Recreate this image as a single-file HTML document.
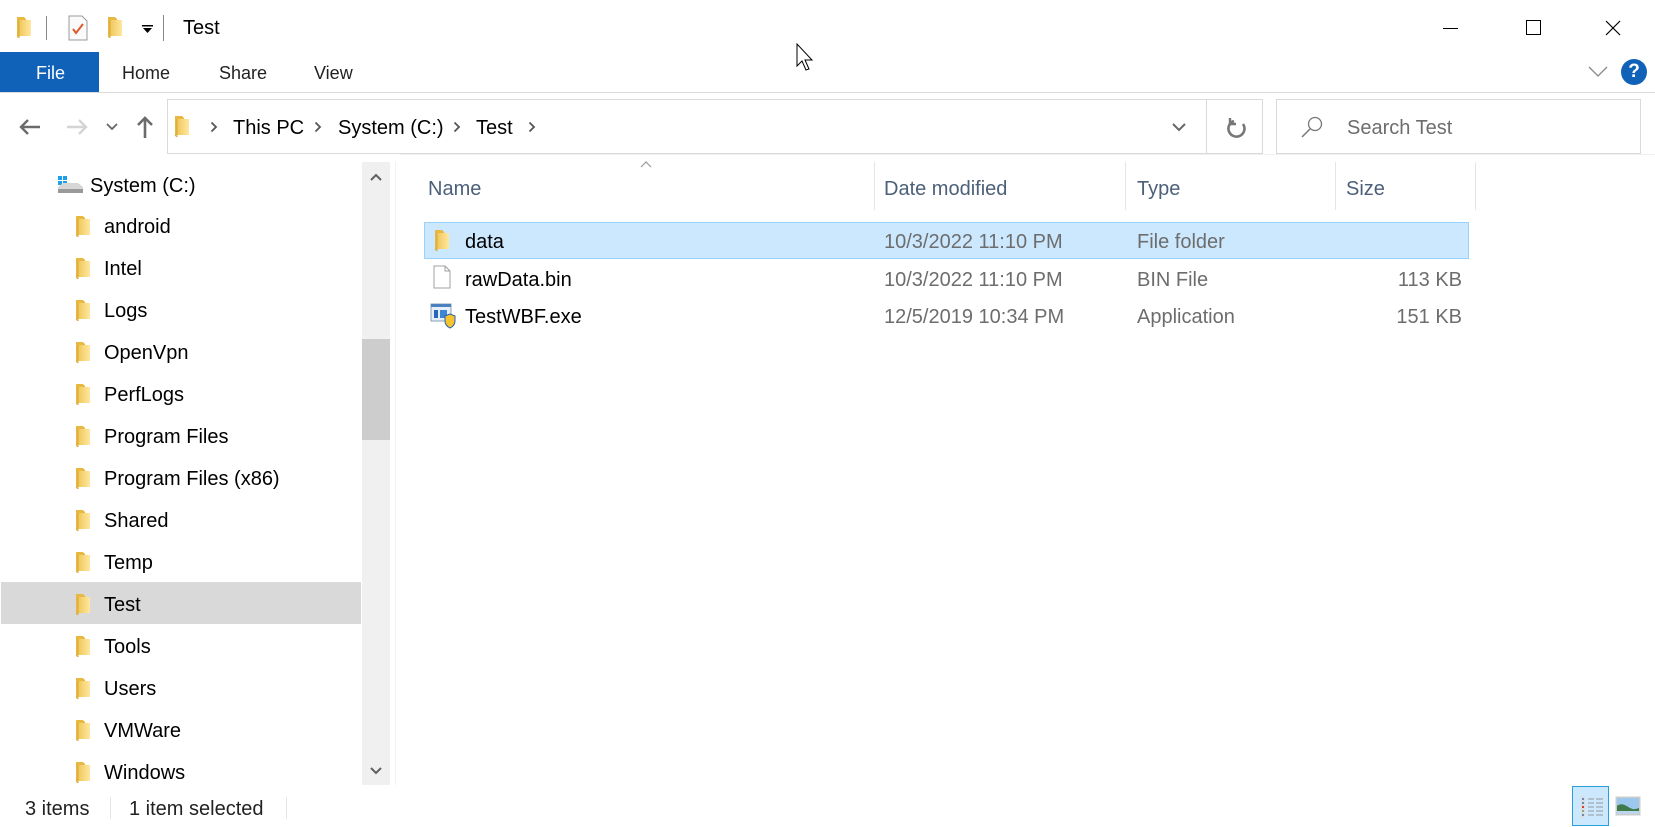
<!DOCTYPE html>
<html><head><meta charset="utf-8"><style>
*{margin:0;padding:0;box-sizing:border-box}
body{width:1655px;height:827px;background:#fff;position:relative;overflow:hidden;font-family:"Liberation Sans",sans-serif;font-size:20px;color:#000}
.a{position:absolute;white-space:nowrap;line-height:22px}
.g{color:#6d6d6d}
.h{color:#4c607a}
.fd{position:absolute;width:16px;height:22px}
.cv{position:absolute}
</style></head><body>
<svg width="0" height="0" style="position:absolute"><defs>
<linearGradient id="fg" x1="0" y1="0" x2="1" y2="0"><stop offset="0" stop-color="#f0c75a"/><stop offset="1" stop-color="#ffe7a0"/></linearGradient>
<symbol id="fold" viewBox="0 0 16 22"><path d="M1 1h7l2 2v17H1z" fill="#e8b840"/><path d="M3 4h12v16H3z" fill="url(#fg)"/><path d="M1 20l2 2V4" fill="none" stroke="#d9a93a"/></symbol>
<symbol id="chev" viewBox="0 0 8 12"><path d="M1.5 1.5l4.5 4.5-4.5 4.5" fill="none" stroke="#555" stroke-width="1.8"/></symbol>
</defs></svg>

<!-- title bar -->
<svg class="fd" style="left:16px;top:16px"><use href="#fold"/></svg>
<div style="position:absolute;left:46px;top:16px;width:1px;height:24px;background:#888"></div>
<svg style="position:absolute;left:68px;top:15px" width="20" height="26"><path d="M1 1h13l5 5v19H1z" fill="#fafafa" stroke="#999"/><path d="M5 14l3 4 7-9" fill="none" stroke="#e0592a" stroke-width="2"/></svg>
<svg class="fd" style="left:107px;top:16px"><use href="#fold"/></svg>
<svg style="position:absolute;left:142px;top:25px" width="12" height="9"><rect x="0" y="0" width="11" height="1.5" fill="#000"/><path d="M1 3h9l-4.5 5z" fill="#000"/></svg>
<div style="position:absolute;left:163px;top:15px;width:1px;height:26px;background:#888"></div>
<div class="a" style="left:183px;top:17px;font-size:20px">Test</div>
<div style="position:absolute;left:1443px;top:28px;width:15px;height:1px;background:#000"></div>
<div style="position:absolute;left:1526px;top:20px;width:15px;height:15px;border:1px solid #000"></div>
<svg style="position:absolute;left:1605px;top:20px" width="16" height="16"><path d="M1 1L15 15M15 1L1 15" stroke="#000" stroke-width="1.2"/></svg>

<!-- ribbon -->
<div style="position:absolute;left:0;top:52px;width:99px;height:40px;background:#0f62b8"></div>
<div class="a" style="left:36px;top:62px;color:#fff;font-size:18px">File</div>
<div class="a" style="left:122px;top:62px;font-size:18px;color:#222">Home</div>
<div class="a" style="left:219px;top:62px;font-size:18px;color:#222">Share</div>
<div class="a" style="left:314px;top:62px;font-size:18px;color:#222">View</div>
<div style="position:absolute;left:0;top:92px;width:1655px;height:1px;background:#dadada"></div>
<svg style="position:absolute;left:1588px;top:66px" width="20" height="12"><path d="M1 1l9 9 9-9" fill="none" stroke="#888" stroke-width="1.3"/></svg>
<div style="position:absolute;left:1621px;top:59px;width:26px;height:26px;border-radius:50%;background:#0f62b8;color:#fff;font-weight:bold;font-size:19px;text-align:center;line-height:26px">?</div>

<!-- nav buttons -->
<svg style="position:absolute;left:18px;top:118px" width="24" height="18"><path d="M22 9H3M10 2L3 9l7 7" fill="none" stroke="#6b6b6b" stroke-width="2.4"/></svg>
<svg style="position:absolute;left:65px;top:118px" width="24" height="18"><path d="M2 9h19M14 2l7 7-7 7" fill="none" stroke="#d4d4d4" stroke-width="2.4"/></svg>
<svg style="position:absolute;left:106px;top:123px" width="12" height="8"><path d="M1 1l5 5 5-5" fill="none" stroke="#666" stroke-width="1.8"/></svg>
<svg style="position:absolute;left:136px;top:115px" width="18" height="24"><path d="M9 23V3M2 10l7-7 7 7" fill="none" stroke="#6b6b6b" stroke-width="2.6"/></svg>

<!-- address bar -->
<div style="position:absolute;left:167px;top:99px;width:1096px;height:55px;border:1px solid #d9d9d9"></div>
<div style="position:absolute;left:1206px;top:99px;width:1px;height:55px;background:#d9d9d9"></div>
<svg class="fd" style="left:174px;top:115px"><use href="#fold"/></svg>
<svg class="cv" style="left:210px;top:121px" width="8" height="12"><use href="#chev"/></svg>
<div class="a" style="left:233px;top:117px">This PC</div>
<svg class="cv" style="left:314px;top:121px" width="8" height="12"><use href="#chev"/></svg>
<div class="a" style="left:338px;top:117px">System (C:)</div>
<svg class="cv" style="left:453px;top:121px" width="8" height="12"><use href="#chev"/></svg>
<div class="a" style="left:476px;top:117px">Test</div>
<svg class="cv" style="left:528px;top:121px" width="8" height="12"><use href="#chev"/></svg>
<svg style="position:absolute;left:1172px;top:123px" width="14" height="9"><path d="M1 1l6 6 6-6" fill="none" stroke="#666" stroke-width="2"/></svg>
<svg style="position:absolute;left:1226px;top:117px" width="22" height="22"><path d="M8 4A8 8 0 1 0 17 7" fill="none" stroke="#777" stroke-width="2.6"/><path d="M4 1v6h6" fill="none" stroke="#777" stroke-width="2.4"/></svg>

<!-- search -->
<div style="position:absolute;left:1276px;top:99px;width:365px;height:55px;border:1px solid #d9d9d9"></div>
<svg style="position:absolute;left:1300px;top:116px" width="24" height="22"><circle cx="15" cy="8" r="6.5" fill="none" stroke="#777" stroke-width="1.3"/><path d="M10 13L2 21" stroke="#777" stroke-width="1.5"/></svg>
<div class="a" style="left:1347px;top:117px;color:#6d6d6d">Search Test</div>

<!-- nav pane -->
<svg style="position:absolute;left:57px;top:175px" width="27" height="20"><rect x="1" y="1" width="4" height="4" fill="#1ea0e8"/><rect x="6" y="1" width="4" height="4" fill="#1ea0e8"/><rect x="1" y="6" width="4" height="4" fill="#1ea0e8"/><rect x="6" y="6" width="4" height="4" fill="#1ea0e8"/><path d="M1 12l5-4h15l5 4v5H1z" fill="#d6d6d6"/><path d="M1 14h25v4H1z" fill="#9a9a9a"/></svg>
<div class="a" style="left:90px;top:175px">System (C:)</div>
<div style="position:absolute;left:1px;top:582px;width:360px;height:42px;background:#d9d9d9"></div>
<div id="nav"></div>
<div style="position:absolute;left:362px;top:162px;width:28px;height:623px;background:#f0f0f0"></div>
<div style="position:absolute;left:362px;top:339px;width:28px;height:101px;background:#cdcdcd"></div>
<svg style="position:absolute;left:370px;top:173px" width="12" height="8"><path d="M1 7l5-5 5 5" fill="none" stroke="#606060" stroke-width="2"/></svg>
<svg style="position:absolute;left:370px;top:767px" width="12" height="8"><path d="M1 1l5 5 5-5" fill="none" stroke="#606060" stroke-width="2"/></svg>
<div style="position:absolute;left:395px;top:162px;width:1px;height:623px;background:#f2f2f2"></div>

<!-- header -->
<div style="position:absolute;left:400px;top:154px;width:1255px;height:1px;background:#f0f0f0"></div>
<svg style="position:absolute;left:640px;top:161px" width="12" height="7"><path d="M1 6l5-5 5 5" fill="none" stroke="#999" stroke-width="1.2"/></svg>
<div class="a h" style="left:428px;top:178px">Name</div>
<div class="a h" style="left:884px;top:178px">Date modified</div>
<div class="a h" style="left:1137px;top:178px">Type</div>
<div class="a h" style="left:1346px;top:178px">Size</div>
<div style="position:absolute;left:874px;top:162px;width:1px;height:48px;background:#e5e5e5"></div>
<div style="position:absolute;left:1125px;top:162px;width:1px;height:48px;background:#e5e5e5"></div>
<div style="position:absolute;left:1335px;top:162px;width:1px;height:48px;background:#e5e5e5"></div>
<div style="position:absolute;left:1475px;top:162px;width:1px;height:48px;background:#e5e5e5"></div>

<!-- rows -->
<div style="position:absolute;left:424px;top:222px;width:1045px;height:37px;background:#cce8ff;border:1px solid #99d1ff"></div>
<svg class="fd" style="left:434px;top:229px"><use href="#fold"/></svg>
<div class="a" style="left:465px;top:231px">data</div>
<div class="a g" style="left:884px;top:231px">10/3/2022 11:10 PM</div>
<div class="a g" style="left:1137px;top:231px">File folder</div>

<svg style="position:absolute;left:433px;top:265px" width="18" height="24"><path d="M1 1h11l5 5v17H1z" fill="#fff" stroke="#a0a0a0"/><path d="M12 1v5h5" fill="none" stroke="#a0a0a0"/></svg>
<div class="a" style="left:465px;top:269px">rawData.bin</div>
<div class="a g" style="left:884px;top:269px">10/3/2022 11:10 PM</div>
<div class="a g" style="left:1137px;top:269px">BIN File</div>
<div class="a g" style="left:1362px;top:269px;width:100px;text-align:right">113 KB</div>

<svg style="position:absolute;left:430px;top:303px" width="26" height="26"><rect x="1" y="1" width="20" height="17" fill="#e6eef7" stroke="#8aa0b8"/><rect x="1" y="1" width="20" height="3" fill="#4a7fc0"/><rect x="4" y="7" width="4" height="8" fill="#2a66b8"/><rect x="10" y="7" width="7" height="8" fill="#3b86d6"/><path d="M15 13l5-2 5 2v5c0 4-3 6-5 7-2-1-5-3-5-7z" fill="#f4c430" stroke="#2a5fa8"/></svg>
<div class="a" style="left:465px;top:306px">TestWBF.exe</div>
<div class="a g" style="left:884px;top:306px">12/5/2019 10:34 PM</div>
<div class="a g" style="left:1137px;top:306px">Application</div>
<div class="a g" style="left:1362px;top:306px;width:100px;text-align:right">151 KB</div>

<!-- cursor -->
<svg style="position:absolute;left:796px;top:43px" width="20" height="30"><path d="M1 1v22l5-5 4 9 3-1-4-9h7z" fill="#fff" stroke="#000" stroke-width="1"/></svg>

<!-- status bar -->
<div class="a" style="left:25px;top:798px;color:#222">3 items</div>
<div style="position:absolute;left:110px;top:797px;width:1px;height:22px;background:#e5e5e5"></div>
<div class="a" style="left:129px;top:798px;color:#222">1 item selected</div>
<div style="position:absolute;left:286px;top:797px;width:1px;height:22px;background:#e5e5e5"></div>
<div style="position:absolute;left:1572px;top:786px;width:37px;height:40px;background:#cce8ff;border:1px solid #26a0da"></div>
<svg style="position:absolute;left:1580px;top:795px" width="24" height="24"><rect x="1" y="1" width="4" height="22" fill="#ddd"/><rect x="2" y="3" width="2" height="2" fill="#6a8ab8"/><rect x="2" y="7" width="2" height="2" fill="#6a8ab8"/><rect x="2" y="11" width="2" height="2" fill="#d04030"/><rect x="2" y="15" width="2" height="2" fill="#8a8"/><rect x="2" y="19" width="2" height="2" fill="#6a8ab8"/><path d="M8 4h6M16 4h7M8 8h6M16 8h7M8 12h6M16 12h7M8 16h6M16 16h7M8 20h6M16 20h7" stroke="#999" stroke-width="1"/></svg>
<svg style="position:absolute;left:1615px;top:796px" width="26" height="20"><rect x="0.5" y="0.5" width="25" height="19" fill="#ccc"/><rect x="2" y="2" width="22" height="16" fill="#9cc8ee"/><path d="M2 10c5-4 9 0 13 2s6 1 9 0v6H2z" fill="#3f7a4a"/><path d="M2 15h22v3H2z" fill="#bcd6ee"/></svg>

<script>
var n=["android","Intel","Logs","OpenVpn","PerfLogs","Program Files","Program Files (x86)","Shared","Temp","Test","Tools","Users","VMWare","Windows"],h="";
n.forEach(function(t,i){var y=226+42*i;h+='<svg class="fd" style="left:75px;top:'+(y-11)+'px"><use href="#fold"/></svg><div class="a" style="left:104px;top:'+(y-10)+'px">'+t+'</div>';});
document.getElementById("nav").innerHTML=h;
</script>
</body></html>
